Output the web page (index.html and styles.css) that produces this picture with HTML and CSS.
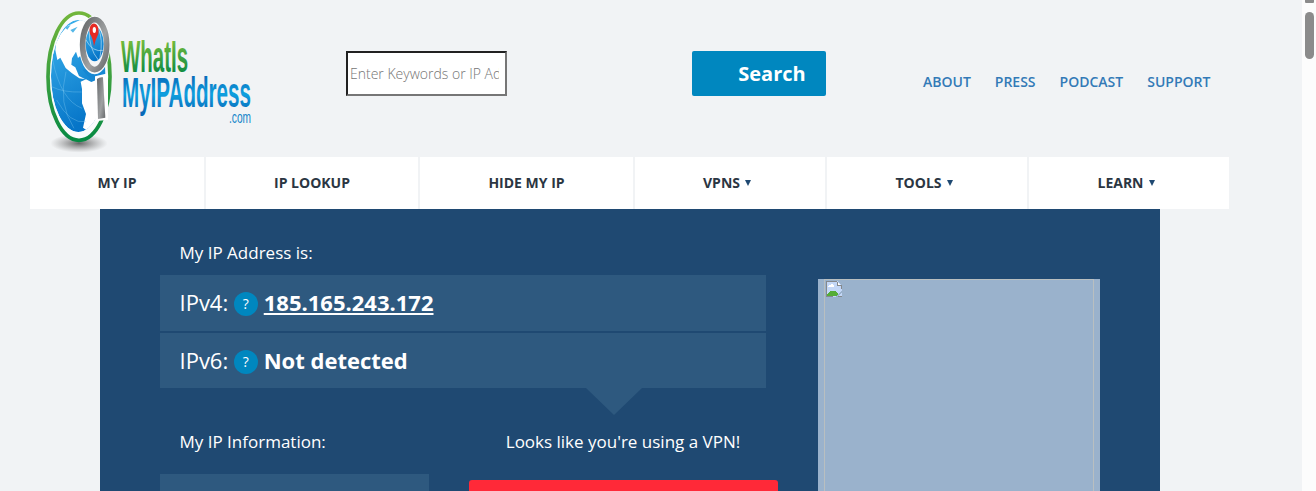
FILE: index.html
```html
<!DOCTYPE html>
<html lang="en">
<head>
<meta charset="utf-8">
<title>What Is My IP Address</title>
<link rel="stylesheet" href="styles.css">
</head>
<body>
<div class="page">
  <header class="header">
    <svg class="logo" width="216" height="156" viewBox="40 0 216 156" role="img" aria-label="WhatIsMyIPAddress.com">
      <defs>
        <linearGradient id="ring" x1="0" y1="0" x2="0" y2="1"><stop offset="0" stop-color="#72b63c"/><stop offset="1" stop-color="#068a43"/></linearGradient>
        <linearGradient id="sea" x1="0" y1="0" x2=".3" y2="1"><stop offset="0" stop-color="#3db4ee"/><stop offset="1" stop-color="#0675c8"/></linearGradient>
        <linearGradient id="metal" x1="0" y1="0" x2="1" y2="1"><stop offset="0" stop-color="#65686a"/><stop offset=".6" stop-color="#a0a2a3"/><stop offset="1" stop-color="#66696b"/></linearGradient>
        <linearGradient id="green" gradientUnits="userSpaceOnUse" x1="0" y1="39" x2="0" y2="72"><stop offset="0" stop-color="#79bd3c"/><stop offset="1" stop-color="#128d43"/></linearGradient>
        <linearGradient id="blue" gradientUnits="userSpaceOnUse" x1="0" y1="75" x2="0" y2="113"><stop offset="0" stop-color="#0868b8"/><stop offset=".5" stop-color="#0fa0df"/><stop offset="1" stop-color="#0868b8"/></linearGradient>
        <radialGradient id="shade"><stop offset="0" stop-color="#444" stop-opacity=".8"/><stop offset="1" stop-color="#777" stop-opacity="0"/></radialGradient>
        <clipPath id="globe"><ellipse cx="145" cy="228" rx="82" ry="168"/></clipPath>
      </defs>
      <g transform="translate(30 0) scale(.3333)">
        <ellipse cx="147" cy="430" rx="86" ry="28" fill="url(#shade)"/>
        <ellipse cx="147" cy="230" rx="93" ry="191" fill="#f9fbfc" stroke="url(#ring)" stroke-width="11"/>
        <g clip-path="url(#globe)">
          <ellipse cx="145" cy="228" rx="82" ry="168" fill="url(#sea)"/>
          <path d="M78 130 L92 102 L112 78 L150 60 L190 60 L170 95 L150 124 L154 165 L144 174 L138 155 L126 175 L124 194 L136 202 L147 228 L166 238 L148 235 L126 220 L107 204 L91 173 L82 180 L76 150Z" fill="#fff"/>
          <path d="M152 245 L168 238 L184 246 L204 238 L250 232 L250 300 L225 360 L202 363 L188 381 L170 391 L159 383 L168 342 L156 310 L156 267Z" fill="#fff"/>
          <path d="M104 82l18-7-10 14zM121 90l22-10-14 18z" fill="#55b8e8"/>
          <path d="M68 180Q92 300 156 325M80 300Q120 373 168 365M108 215Q83 310 132 385M65 260Q100 278 155 276" fill="none" stroke="#8bd0f4" stroke-width="1.7" opacity=".6"/>
        </g>
        <path d="M158 210L176 204L195 230L218 235L204 240L182 240L174 229Z" fill="#1687d2"/>
        <ellipse cx="194" cy="135" rx="47" ry="88" fill="#f8fafb"/>
        <ellipse cx="194" cy="134" rx="36" ry="75" fill="#f4f6f7" stroke="url(#metal)" stroke-width="17"/>
        <ellipse cx="194" cy="132" rx="27" ry="52" fill="url(#sea)"/>
        <path d="M168 120Q188 158 220 151M178 90Q176 145 205 180M205 86Q220 115 210 173" fill="none" stroke="#c1e4f5" stroke-width="2"/>
        <path d="M192 139Q189 115 180 102C171 60 212 60 205 102Q196 119 192 139Z" fill="#e62b24"/>
        <ellipse cx="193" cy="90" rx="5" ry="9" fill="#fff"/>
        <path d="M195 229L234 220V360L196 363Z" fill="#fff"/>
        <path d="M201 237Q209 230 219 232L226 353L204 357Z" fill="url(#metal)"/>
      </g>
      <g class="logo-text">
        <text x="121" y="72" font-size="44" textLength="67" lengthAdjust="spacingAndGlyphs" fill="url(#green)">WhatIs</text>
        <text x="122" y="107" font-size="43" textLength="129" lengthAdjust="spacingAndGlyphs" fill="url(#blue)">MyIPAddress</text>
        <text class="logo-com" x="229" y="123" font-size="16" textLength="22" lengthAdjust="spacingAndGlyphs" fill="#1485c9">.com</text>
      </g>
    </svg>
    <input class="search-input" type="text" placeholder="Enter Keywords or IP Address...">
    <button class="search-button">Search</button>
    <nav class="links"><a>ABOUT</a><a>PRESS</a><a>PODCAST</a><a>SUPPORT</a></nav>
  </header>
  <nav class="menu">
    <a>MY IP</a><a>IP LOOKUP</a><a>HIDE MY IP</a>
    <a class="has-menu">VPNS<i class="caret"></i></a><a class="has-menu">TOOLS<i class="caret"></i></a><a class="has-menu">LEARN<i class="caret"></i></a>
  </nav>
  <main class="panel">
    <section class="details">
      <h2 class="label">My IP Address is:</h2>
      <div class="addresses">
        <div class="address"><span>IPv4:</span><span class="help">?</span><b class="ip">185.165.243.172</b></div>
        <div class="address"><span>IPv6:</span><span class="help">?</span><b>Not detected</b></div>
      </div>
      <div class="columns">
        <div class="info"><h2 class="label">My IP Information:</h2><div class="info-box"></div></div>
        <div class="vpn"><div class="pointer"></div><h2 class="notice">Looks like you're using a VPN!</h2><div class="vpn-button"></div></div>
      </div>
    </section>
    <aside class="map"><div class="map-frame">
      <svg width="16" height="16" viewBox="0 0 16 16" shape-rendering="crispEdges"><path d="M0 0H11L16 5V16H0Z" fill="#c3d7f7"/><path d="M2 5h1V4h2V3h2v1h1v2H2Z" fill="#fff"/><path d="M1 15V13L5 10H9L12 13L10 15Z" fill="#55ad36"/><path d="M11 1V5H15Z" fill="#fff"/><path d="M9 16L16 9V11L12 16Z" fill="#9ab2cc"/><path d="M.5 16V.5H11M11.5 1V4.5H15M15.5 4V8M0 15.5H7M12 15.5H16V12" fill="none" stroke="#85898d"/></svg>
    </div></aside>
  </main>
</div>
<div class="scrollbar"><div class="scroll-arrow"></div><div class="scroll-thumb"></div></div>
</body>
</html>
```
FILE: styles.css
```css
* { box-sizing: border-box; }
body { margin: 0; height: 491px; overflow: hidden; display: flex; background: #f1f3f5; font-family: "Open Sans", sans-serif; }
.page { width: 1302px; height: 491px; overflow: hidden; }
.header { height: 157px; display: flex; align-items: flex-start; padding-left: 40px; }
.logo { flex: none; overflow: visible; }
.logo-text { font-family: "Liberation Sans", sans-serif; font-weight: 700; }
.logo-com { font-weight: 400; }
.search-input { width: 161px; height: 45px; margin: 51px 0 0 90px; padding: 1px 6px 1px 2px; border: 2px inset #767676; background: #fff; font: 300 14px "Open Sans", sans-serif; }
.search-input::placeholder { color: #757575; }
.search-button { width: 134px; height: 45px; margin: 51px 0 0 185px; padding: 0 20px 0 46px; border: 0; border-radius: 2px; background: #0087bf; color: #fff; font: 700 20px "Open Sans", sans-serif; }
.links { display: flex; gap: 24px; margin: 72px 0 0 97px; color: #337ab7; font-size: 14px; font-weight: 600; line-height: 20px; }
.menu { width: 1199px; height: 52px; margin-left: 30px; display: grid; grid-template-columns: 174px 212px 213px 190px 200px 200px; gap: 2px; }
.menu a { display: flex; align-items: center; justify-content: center; padding-bottom: 2px; background: #fff; color: #2b3642; font-size: 14px; font-weight: 700; }
.menu .has-menu { padding-right: 6px; }
.caret { margin: 1px 0 0 5px; border: 3px solid transparent; border-top: 6px solid #1f4972; border-bottom: 0; }
.panel { width: 1060px; height: 282px; margin-left: 100px; padding-left: 60px; display: flex; background: #1f4972; color: #fff; overflow: hidden; }
.details { width: 618px; }
.label, .notice { margin: 0; font-size: 17px; font-weight: 400; line-height: 24px; }
.label { padding-left: 19.5px; }
.details > .label { padding-top: 32px; height: 66px; }
.addresses { width: 606px; display: grid; grid-template-rows: 56px 55px; gap: 2px; }
.address { display: flex; align-items: center; padding: 0 0 2px 19.5px; background: #2e597f; font-size: 22px; }
.help { width: 24px; height: 24px; margin: 4px 6px 0 5.5px; border-radius: 50%; background: #0087bf; font-size: 14px; line-height: 24px; text-align: center; }
.ip { text-decoration: underline; }
.columns { display: flex; }
.info { width: 309px; padding-top: 42px; }
.info-box { width: 269px; height: 40px; margin-top: 20px; background: #2e597f; }
.vpn { width: 309px; }
.pointer { width: 0; height: 27px; margin: 0 0 15px 117px; border: 28px solid transparent; border-top: 27px solid #2e597f; border-bottom: 0; }
.notice { padding-right: 1px; text-align: center; }
.vpn-button { height: 40px; margin-top: 26px; border-radius: 3px; background: #ff2938; }
.map { width: 282px; height: 212px; margin: 70px 0 0 40px; padding: 0 6px; background: #9ab2cc; }
.map-frame { height: 230px; padding: 1px; border: 1px solid #b9bfc0; }
.map-frame svg { display: block; }
.scrollbar { width: 14px; height: 491px; padding-left: 3px; background: #fcfcfc; }
.scroll-arrow { width: 9px; height: 3px; border-radius: 0 0 1px 1px; background: #8b8b8b; }
.scroll-thumb { width: 9px; height: 47px; margin-top: 9px; border-radius: 5px; background: #8b8b8b; }
```
